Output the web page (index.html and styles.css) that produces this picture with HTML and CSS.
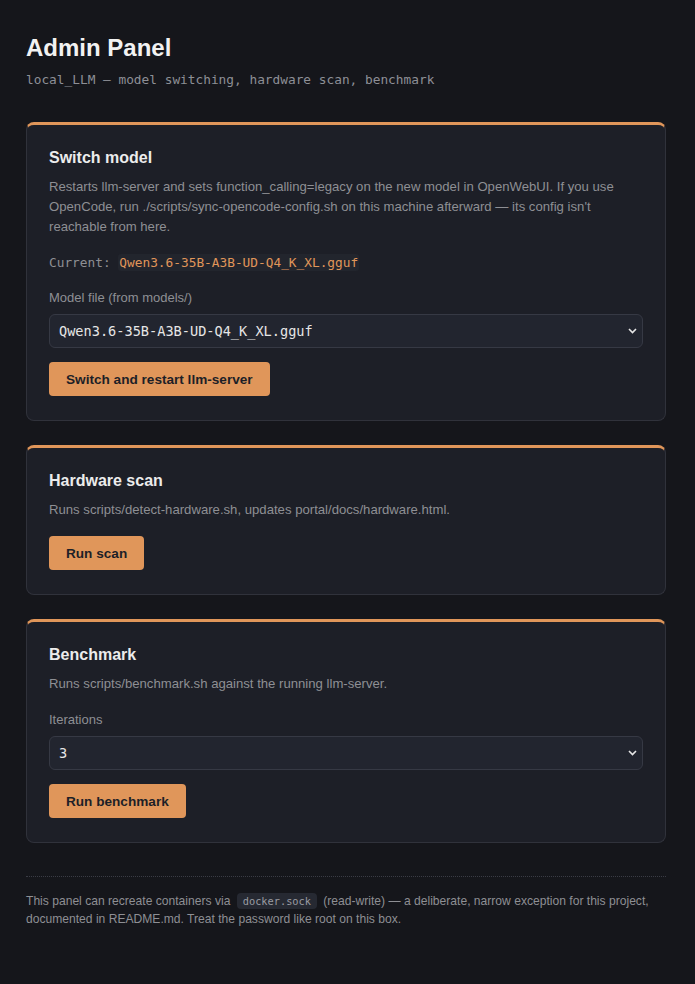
FILE: index.html
```html
<!DOCTYPE html>
<html lang="en">
<head>
    <meta charset="UTF-8">
    <meta name="viewport" content="width=device-width, initial-scale=1.0">
    <title>Admin Panel</title>
    <link rel="stylesheet" href="styles.css">
</head>
<body>
    <div class="page">
        <h1 class="title">Admin Panel</h1>
        <p class="subtitle">local_LLM — model switching, hardware scan, benchmark</p>

        <div class="card">
            <h2>Switch model</h2>
            <p class="desc">Restarts llm-server and sets function_calling=legacy on the new model in OpenWebUI. If you use OpenCode, run ./scripts/sync-opencode-config.sh on this machine afterward — its config isn't reachable from here.</p>
            <p class="current">Current: <code class="model">Qwen3.6-35B-A3B-UD-Q4_K_XL.gguf</code></p>
            <label class="label" for="model">Model file (from models/)</label>
            <div class="select">
                <select id="model">
                    <option>Qwen3.6-35B-A3B-UD-Q4_K_XL.gguf</option>
                </select>
                <svg class="chev" width="9" height="6" viewBox="0 0 9 6"><path d="M1 1l3.5 3.5L8 1" fill="none" stroke="#e6e6e6" stroke-width="1.6"/></svg>
            </div>
            <button class="btn">Switch and restart llm-server</button>
        </div>

        <div class="card">
            <h2>Hardware scan</h2>
            <p class="desc">Runs scripts/detect-hardware.sh, updates portal/docs/hardware.html.</p>
            <button class="btn">Run scan</button>
        </div>

        <div class="card">
            <h2>Benchmark</h2>
            <p class="desc">Runs scripts/benchmark.sh against the running llm-server.</p>
            <label class="label" for="iter">Iterations</label>
            <div class="select">
                <select id="iter">
                    <option>3</option>
                </select>
                <svg class="chev" width="9" height="6" viewBox="0 0 9 6"><path d="M1 1l3.5 3.5L8 1" fill="none" stroke="#e6e6e6" stroke-width="1.6"/></svg>
            </div>
            <button class="btn">Run benchmark</button>
        </div>

        <div class="footer">
            This panel can recreate containers via <code class="chip">docker.sock</code> (read-write) — a deliberate, narrow exception for this project, documented in README.md. Treat the password like root on this box.
        </div>
    </div>
</body>
</html>
```

FILE: styles.css
```css
*{
    padding: 0px;
    margin: 0px;
    box-sizing: border-box;
}
body{
    background: #15161b;
    color: #e6e6e6;
    font-family: "Liberation Sans", Arial, sans-serif;
}
.page{
    padding: 34px 26px 40px;
    box-sizing: content-box;
    width: 640px;
}
.title{
    font-size: 24px;
    font-weight: bold;
    line-height: 28px;
    color: #f2f2f2;
}
.subtitle{
    margin-top: 10px;
    font-family: "DejaVu Sans Mono", monospace;
    font-size: 12.8px;
    color: #8d8f96;
    line-height: 16px;
}
.card{
    margin-top: 24px;
    background: #1d1f27;
    border: 1px solid #30323b;
    border-top: 3px solid #e0965a;
    border-radius: 8px;
    padding: 23px 22px 24px;
    display: flex;
    flex-direction: column;
    align-items: flex-start;
}
.subtitle + .card{
    margin-top: 34px;
}
.card h2{
    font-size: 16px;
    font-weight: bold;
    line-height: 20px;
    color: #ececec;
}
.desc{
    margin-top: 9px;
    font-size: 13.15px;
    line-height: 20px;
    color: #8e8f94;
}
.current{
    margin-top: 17px;
    font-family: "DejaVu Sans Mono", monospace;
    font-size: 12.8px;
    line-height: 18px;
    color: #8e8f94;
}
.model{
    font-family: "DejaVu Sans Mono", monospace;
    color: #e0965a;
    background: #22252d;
    border-radius: 3px;
    padding: 1px 1px;
}
.label{
    margin-top: 18px;
    font-size: 13px;
    line-height: 16px;
    color: #8e8f94;
}
.select{
    position: relative;
    margin-top: 8px;
    width: 100%;
}
.select select{
    display: block;
    appearance: none;
    width: 100%;
    height: 34px;
    background: #22252f;
    border: 1px solid #363944;
    border-radius: 6px;
    color: #e6e6e6;
    font-family: "DejaVu Sans Mono", monospace;
    font-size: 13.6px;
    line-height: 20px;
    padding: 6px 9px;
}
.select .chev{
    position: absolute;
    right: 6px;
    top: 14px;
}
.btn{
    margin-top: 14px;
    background: #e0965a;
    color: #1d1f27;
    border: none;
    border-radius: 4px;
    font-family: "Liberation Sans", Arial, sans-serif;
    font-size: 13.6px;
    font-weight: bold;
    height: 34px;
    padding: 0 17px;
}
.desc + .btn{
    margin-top: 16px;
}
.footer{
    margin-top: 33px;
    border-top: 1px dotted #3a3c45;
    padding-top: 15px;
    font-size: 12.1px;
    line-height: 18px;
    color: #8e8f94;
}
.chip{
    display: inline-block;
    font-family: "DejaVu Sans Mono", monospace;
    font-size: 10.3px;
    line-height: 16px;
    background: #262932;
    border-radius: 4px;
    padding: 0 6px;
    margin: 0 3px;
    color: #9a9ca2;
}
```
